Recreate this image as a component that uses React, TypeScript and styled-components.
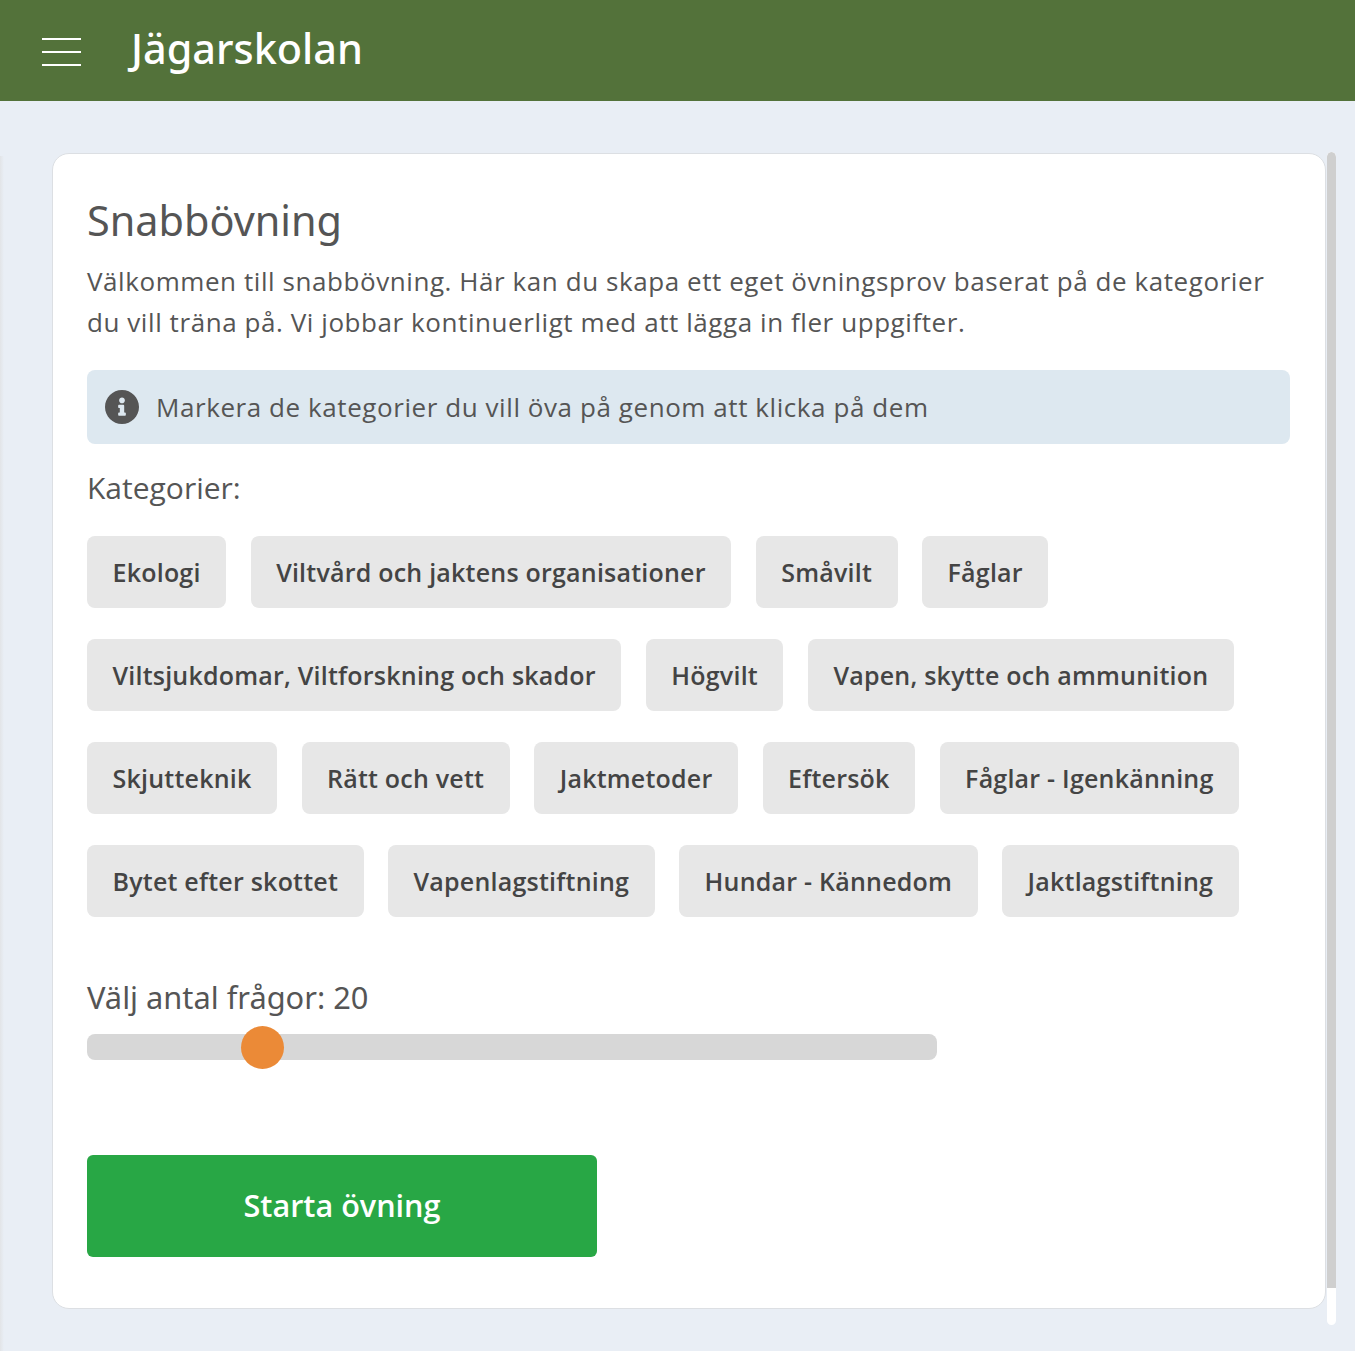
import React from 'react'
import styled, { createGlobalStyle } from 'styled-components'

const GlobalStyle = createGlobalStyle`
  html, body {
    margin: 0;
    padding: 0;
    background: #e9eef5;
    overflow: hidden;
  }
  * {
    box-sizing: border-box;
  }
`

const Page = styled.div`
  height: 1351px;
  display: flex;
  flex-direction: column;
  font-family: "Open Sans", "Liberation Sans", sans-serif;
  color: #555;
`

const Header = styled.header`
  height: 101px;
  flex-shrink: 0;
  background: #53723a;
  display: flex;
  align-items: center;
  padding-left: 42px;
`

const Burger = styled.div`
  width: 39px;
  height: 28px;
  display: flex;
  flex-direction: column;
  justify-content: space-between;
  margin-right: 50px;
  margin-top: 3px;

  span {
    display: block;
    height: 2px;
    background: #fff;
  }
`

const Brand = styled.div`
  font-family: "Noto Sans", "Open Sans", sans-serif;
  font-size: 41.4px;
  font-weight: 500;
  line-height: 1;
  color: #fff;
  margin-top: -3px;
`

const Main = styled.main`
  position: relative;
  flex-grow: 1;
  display: flex;
  align-items: flex-start;
  padding: 52px 0 0 52px;
`

const SideShadow = styled.div`
  position: absolute;
  left: 0;
  top: 55px;
  bottom: 0;
  width: 4px;
  background: linear-gradient(to right, #e2e4e7, #e9eef5);
`

const Card = styled.section`
  width: 1274px;
  height: 1156px;
  background: #fff;
  border: 1px solid #dcdfe3;
  border-radius: 17px;
  padding: 34px;
`

const ScrollTrack = styled.div`
  width: 9px;
  height: 1173px;
  margin-left: 1px;
  margin-top: -1px;
  background: #fff;
  border-radius: 5px;
  overflow: hidden;
`

const ScrollThumb = styled.div`
  height: 1136px;
  background: #cfcfcf;
  border-radius: 5px 5px 0 0;
`

const Title = styled.h1`
  margin: 0 0 9px;
  font-family: "Noto Sans", "Open Sans", sans-serif;
  font-size: 41.4px;
  font-weight: 400;
  line-height: 64px;
  color: #555;
`

const Intro = styled.p`
  margin: 0 0 27px;
  font-size: 26px;
  line-height: 41px;
  letter-spacing: 0.57px;
  color: #555;
`

const Notice = styled.div`
  height: 74px;
  width: 1203px;
  display: flex;
  align-items: center;
  gap: 17px;
  padding-left: 18px;
  background: #dde8f0;
  border-radius: 8px;
  font-size: 26px;
  letter-spacing: 0.57px;
  color: #555;
`

const Subtitle = styled.h2`
  margin: 22px 0 26px;
  font-size: 30px;
  font-weight: 400;
  line-height: 44px;
  color: #555;
`

const ChipList = styled.div`
  display: flex;
  flex-wrap: wrap;
  gap: 31px 24.5px;
`

const Chip = styled.button`
  height: 72px;
  padding: 0 25.5px;
  border: 0;
  border-radius: 8px;
  background: #e7e7e7;
  font-family: inherit;
  font-size: 25px;
  font-weight: 600;
  letter-spacing: 0.22px;
  color: #444;
`

const SliderLabel = styled.div`
  margin-top: 56px;
  font-family: "Noto Sans", "Open Sans", sans-serif;
  font-size: 30.8px;
  line-height: 48px;
  color: #555;
`

const SliderTrack = styled.div`
  position: relative;
  width: 850px;
  height: 26px;
  margin-top: 13px;
  background: #d7d7d7;
  border-radius: 8px;
`

const SliderThumb = styled.div`
  position: absolute;
  top: -8px;
  width: 43px;
  height: 43px;
  border-radius: 50%;
  background: #eb8a37;
`

const StartButton = styled.button`
  display: block;
  width: 510px;
  height: 102px;
  margin-top: 95px;
  padding: 0 0 2px;
  border: 0;
  border-radius: 6px;
  background: #28a745;
  font-family: inherit;
  font-size: 30.6px;
  font-weight: 600;
  color: #fff;
`

const categories = [
  'Ekologi',
  'Viltvård och jaktens organisationer',
  'Småvilt',
  'Fåglar',
  'Viltsjukdomar, Viltforskning och skador',
  'Högvilt',
  'Vapen, skytte och ammunition',
  'Skjutteknik',
  'Rätt och vett',
  'Jaktmetoder',
  'Eftersök',
  'Fåglar - Igenkänning',
  'Bytet efter skottet',
  'Vapenlagstiftning',
  'Hundar - Kännedom',
  'Jaktlagstiftning',
]

function InfoIcon() {
  return (
    <svg width="34" height="34" viewBox="8 8 496 496" fill="#555" style={{ flexShrink: 0 }}>
      <path d="M256 8C119 8 8 119 8 256s111 248 248 248 248-111 248-248S393 8 256 8zm0 110c23 0 42 19 42 42s-19 42-42 42-42-19-42-42 19-42 42-42zm56 254c0 7-5 12-12 12h-88c-7 0-12-5-12-12v-24c0-7 5-12 12-12h12v-64h-12c-7 0-12-5-12-12v-24c0-7 5-12 12-12h64c7 0 12 5 12 12v100h12c7 0 12 5 12 12v24z" />
    </svg>
  )
}

export default function App() {
  return (
    <Page>
      <GlobalStyle />
      <Header>
        <Burger>
          <span />
          <span />
          <span />
        </Burger>
        <Brand>Jägarskolan</Brand>
      </Header>
      <Main>
        <SideShadow />
        <Card>
          <Title>Snabbövning</Title>
          <Intro>
            Välkommen till snabbövning. Här kan du skapa ett eget övningsprov baserat på de kategorier du vill träna på. Vi jobbar kontinuerligt med att lägga in fler uppgifter.
          </Intro>
          <Notice>
            <InfoIcon />
            Markera de kategorier du vill öva på genom att klicka på dem
          </Notice>
          <Subtitle>Kategorier:</Subtitle>
          <ChipList>
            {categories.map((name) => (
              <Chip key={name}>{name}</Chip>
            ))}
          </ChipList>
          <SliderLabel>Välj antal frågor: 20</SliderLabel>
          <SliderTrack>
            <SliderThumb style={{ left: 154 }} />
          </SliderTrack>
          <StartButton>Starta övning</StartButton>
        </Card>
        <ScrollTrack>
          <ScrollThumb />
        </ScrollTrack>
      </Main>
    </Page>
  )
}
